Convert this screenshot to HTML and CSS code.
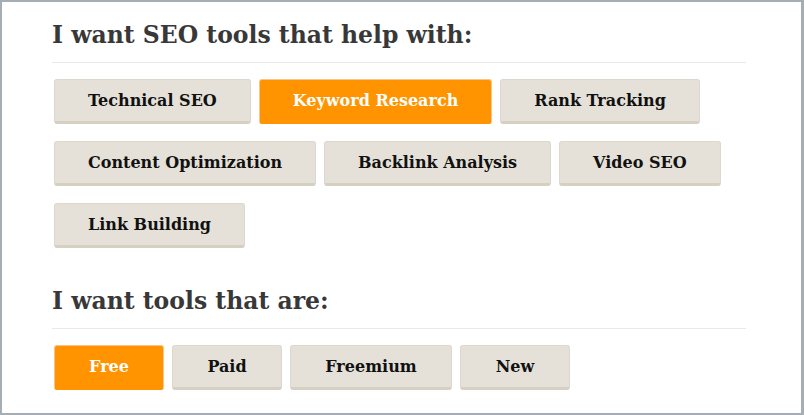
FILE: index.html
```html
<!DOCTYPE html>
<html lang="en">
<head>
  <meta charset="UTF-8" />
  <title>SEO Tool Finder</title>
  <link rel="stylesheet" href="styles.css">
</head>
<body>
  <div id="app">
    <div class="filter">
      <h2>I want SEO tools that help with:</h2>
      <div class="options">
        <button>Technical SEO</button>
        <button class="active">Keyword Research</button>
        <button>Rank Tracking</button>
        <button>Content Optimization</button>
        <button>Backlink Analysis</button>
        <button>Video SEO</button>
        <button>Link Building</button>
      </div>
    </div>

    <div class="filter">
      <h2>I want tools that are:</h2>
      <div class="options">
        <button class="active short">Free</button>
        <button class="short">Paid</button>
        <button class="wide">Freemium</button>
        <button class="short">New</button>
      </div>
    </div>
  </div>
</body>
</html>
```
FILE: styles.css
```css
html, body {
  margin: 0;
  height: 100%;
}
body {
  background: #fff;
  font-family: "DejaVu Serif", serif;
}
#app {
  box-sizing: border-box;
  height: 100%;
  border: 2px solid #a6adb5;
  border-right-width: 3px;
  padding: 18px 55px 0 50px;
}
h2 {
  margin: 0 0 16px;
  padding-bottom: 12px;
  border-bottom: 1px solid #e9e9e9;
  font-size: 23.5px;
  line-height: 30px;
  color: #383838;
}
.filter {
  margin-bottom: 38px;
}
.options {
  display: flex;
  flex-wrap: wrap;
  gap: 17px 8px;
  padding-left: 2px;
}
button {
  font-family: "DejaVu Serif", serif;
  font-weight: bold;
  font-size: 16px;
  line-height: 22px;
  color: #111;
  background: #e5e1d8;
  border: 1px solid #ddd8ce;
  border-bottom: 3px solid #d6d0c3;
  border-radius: 3px;
  padding: 10px 33px 9px;
  cursor: pointer;
}
button.short {
  min-width: 110px;
  padding: 10px 20px 9px;
}
button.wide {
  min-width: 162px;
}
button.active {
  background: #ff9400;
  border-color: #f7c58a;
  border-bottom-color: #ff9400;
  color: #fff;
}
```
